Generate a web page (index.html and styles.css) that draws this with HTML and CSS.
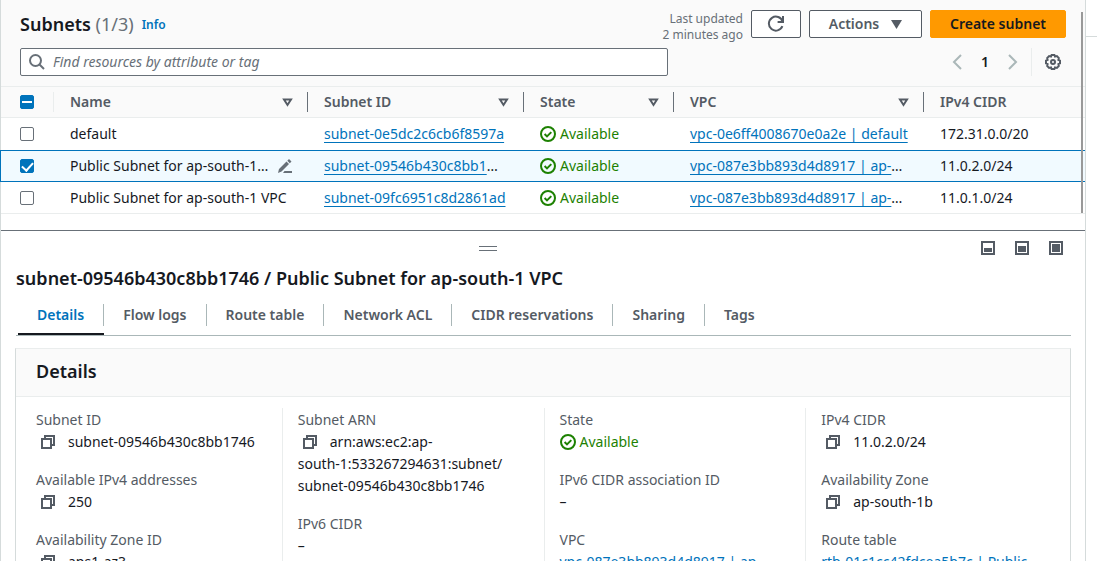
FILE: index.html
```
<!DOCTYPE html>
<html lang="en">
<head>
<meta charset="utf-8">
<title>Subnets</title>
<link rel="stylesheet" href="styles.css">
</head>
<body>
<svg class="defs" aria-hidden="true">
  <symbol id="ok" viewBox="0 0 16 16"><circle cx="8" cy="8" r="7"/><path d="M4.6 8l2.4 2.4 4.3-4.3"/></symbol>
  <symbol id="copy" viewBox="0 0 14 14"><path d="M1 4h9v9H1z M4 4V1h9v9h-3"/></symbol>
  <symbol id="sort" viewBox="0 0 11 9"><path d="M2 1.500h7L5.500 7z"/></symbol>
</svg>
<div class="app">
  <main class="main">
    <section class="list">
      <header class="list-head">
        <div class="title-row">
          <h1 class="title">Subnets <span class="count">(1/3)</span></h1>
          <a class="info" href="#">Info</a>
          <p class="updated">Last updated<br>2 minutes ago</p>
          <button class="btn btn-refresh" type="button" aria-label="Refresh"><svg width="18" height="18" viewBox="0 0 18 18"><path d="M15.4 11.2A7 7 0 1 1 15.6 6.6M16 1v6h-5.4"/></svg></button>
          <button class="btn btn-actions" type="button">Actions <svg class="solid" width="11" height="9" viewBox="0 0 11 9"><path d="M0 0h11L5.500 9z"/></svg></button>
          <button class="btn btn-primary" type="button">Create subnet</button>
        </div>
        <div class="tool-row">
          <label class="search">
            <svg width="16" height="16" viewBox="0 0 16 16"><circle cx="6.500" cy="6.500" r="5.500"/><path d="M10.500 10.500L15 15"/></svg>
            <input type="text" placeholder="Find resources by attribute or tag" aria-label="Find resources">
          </label>
          <nav class="pager">
            <button class="icon-btn faint" type="button" aria-label="Previous page"><svg width="10" height="16" viewBox="0 0 10 16"><path d="M9 1L2 8l7 7"/></svg></button>
            <span class="page">1</span>
            <button class="icon-btn faint" type="button" aria-label="Next page"><svg width="10" height="16" viewBox="0 0 10 16"><path d="M1 1l7 7-7 7"/></svg></button>
          </nav>
          <button class="icon-btn gear" type="button" aria-label="Preferences"><svg width="16" height="16" viewBox="0 0 16 16"><path d="M6.600 1h2.800l.6 1.500 1.900-.4 1.900 1.900-.4 1.900 1.600.700v2.800l-1.600.7.400 1.900-1.900 1.900-1.900-.4-.6 1.500H6.600L6 13.500l-1.900.4L2.200 12l.4-1.900L1 9.400V6.600l1.600-.7L2.200 4l1.900-1.900 1.900.4z"/><circle cx="8" cy="8" r="2"/></svg></button>
        </div>
      </header>
      <table class="grid">
        <colgroup><col class="c-check"><col class="c-name"><col class="c-id"><col class="c-state"><col class="c-vpc"><col></colgroup>
        <thead>
          <tr>
            <th class="check"><div class="th faint-line"><input type="checkbox" class="box mixed" aria-label="Select all"></div></th>
            <th><div class="th">Name <svg width="11" height="9"><use href="#sort"/></svg></div></th>
            <th><div class="th">Subnet ID <svg width="11" height="9"><use href="#sort"/></svg></div></th>
            <th><div class="th">State <svg width="11" height="9"><use href="#sort"/></svg></div></th>
            <th><div class="th">VPC <svg width="11" height="9"><use href="#sort"/></svg></div></th>
            <th><div class="th last">IPv4 CIDR</div></th>
          </tr>
        </thead>
        <tbody>
          <tr>
            <td class="check"><input type="checkbox" class="box" aria-label="Select default"></td>
            <td>default</td>
            <td><a href="#">subnet-0e5dc2c6cb6f8597a</a></td>
            <td><span class="status"><svg width="16" height="16"><use href="#ok"/></svg>Available</span></td>
            <td><a href="#">vpc-0e6ff4008670e0a2e | default</a></td>
            <td>172.31.0.0/20</td>
          </tr>
          <tr class="selected">
            <td class="check"><input type="checkbox" class="box" checked aria-label="Select Public Subnet"></td>
            <td><div class="editable">Public Subnet for ap-south-1… <button class="icon-btn" type="button" aria-label="Edit name"><svg class="solid" width="14" height="14" viewBox="0 0 14 14"><path d="M0 14l1-4 7.500-7.500 2.500 2.500L3.500 12.500zM9.300 1.800L11 0l2.500 2.500-1.700 1.700zM6.500 12H14v2H5z"/></svg></button></div></td>
            <td><a href="#">subnet-09546b430c8bb1</a>…</td>
            <td><span class="status"><svg width="16" height="16"><use href="#ok"/></svg>Available</span></td>
            <td><a href="#">vpc-087e3bb893d4d8917 | ap-</a>…</td>
            <td>11.0.2.0/24</td>
          </tr>
          <tr>
            <td class="check"><input type="checkbox" class="box" aria-label="Select Public Subnet 2"></td>
            <td>Public Subnet for ap-south-1 VPC</td>
            <td><a href="#">subnet-09fc6951c8d2861ad</a></td>
            <td><span class="status"><svg width="16" height="16"><use href="#ok"/></svg>Available</span></td>
            <td><a href="#">vpc-087e3bb893d4d8917 | ap-</a>…</td>
            <td>11.0.1.0/24</td>
          </tr>
        </tbody>
      </table>
      <span class="scrollbar"></span>
    </section>

    <section class="panel">
      <div class="panel-bar">
        <span class="handle"></span>
        <div class="sizes">
          <button class="icon-btn" type="button" aria-label="Small panel"><svg width="14" height="14" viewBox="0 0 14 14"><path d="M1 1h12v12H1z"/><path class="fill" d="M3 7h8v4H3z"/></svg></button>
          <button class="icon-btn" type="button" aria-label="Medium panel"><svg width="14" height="14" viewBox="0 0 14 14"><path d="M1 1h12v12H1z"/><path class="fill" d="M3 5h8v6H3z"/></svg></button>
          <button class="icon-btn" type="button" aria-label="Full panel"><svg width="14" height="14" viewBox="0 0 14 14"><path d="M1 1h12v12H1z"/><path class="fill" d="M3 3h8v8H3z"/></svg></button>
        </div>
      </div>
      <h2 class="panel-title">subnet-09546b430c8bb1746 / Public Subnet for ap-south-1 VPC</h2>
      <nav class="tabs">
        <button class="tab active" type="button"><span>Details</span></button>
        <button class="tab" type="button"><span>Flow logs</span></button>
        <button class="tab" type="button"><span>Route table</span></button>
        <button class="tab" type="button"><span>Network ACL</span></button>
        <button class="tab" type="button"><span>CIDR reservations</span></button>
        <button class="tab" type="button"><span>Sharing</span></button>
        <button class="tab" type="button"><span>Tags</span></button>
      </nav>
      <article class="card">
        <h3 class="card-head">Details</h3>
        <div class="columns">
          <dl class="column">
            <dt>Subnet ID</dt>
            <dd><button class="copy" type="button" aria-label="Copy"><svg width="14" height="14"><use href="#copy"/></svg></button>subnet-09546b430c8bb1746</dd>
            <dt>Available IPv4 addresses</dt>
            <dd><button class="copy" type="button" aria-label="Copy"><svg width="14" height="14"><use href="#copy"/></svg></button>250</dd>
            <dt>Availability Zone ID</dt>
            <dd><button class="copy" type="button" aria-label="Copy"><svg width="14" height="14"><use href="#copy"/></svg></button>aps1-az3</dd>
          </dl>
          <dl class="column">
            <dt>Subnet ARN</dt>
            <dd><button class="copy" type="button" aria-label="Copy"><svg width="14" height="14"><use href="#copy"/></svg></button>arn:aws:ec2:ap-<br>south-1:533267294631:subnet/<br>subnet-09546b430c8bb1746</dd>
            <dt>IPv6 CIDR</dt>
            <dd>–</dd>
          </dl>
          <dl class="column">
            <dt>State</dt>
            <dd><span class="status"><svg width="16" height="16"><use href="#ok"/></svg>Available</span></dd>
            <dt>IPv6 CIDR association ID</dt>
            <dd>–</dd>
            <dt>VPC</dt>
            <dd><a href="#">vpc-087e3bb893d4d8917 | ap-</a></dd>
          </dl>
          <dl class="column">
            <dt>IPv4 CIDR</dt>
            <dd><button class="copy" type="button" aria-label="Copy"><svg width="14" height="14"><use href="#copy"/></svg></button>11.0.2.0/24</dd>
            <dt>Availability Zone</dt>
            <dd><button class="copy" type="button" aria-label="Copy"><svg width="14" height="14"><use href="#copy"/></svg></button>ap-south-1b</dd>
            <dt>Route table</dt>
            <dd><a href="#">rtb-01c1cc42fdcea5b7c | Public</a></dd>
          </dl>
        </div>
      </article>
    </section>
  </main>
  <aside class="rail"></aside>
</div>
</body>
</html>
```
FILE: styles.css
```
* { box-sizing: border-box; }
body {
  margin: 0;
  height: 100vh;
  overflow: hidden;
  background: #fff;
  color: #16191f;
  font: 14px/22px "Noto Sans", "Open Sans", sans-serif;
}
h1, h2, h3, p, dl, dd { margin: 0; }
a { color: #0073bb; text-decoration: none; }
button { font: inherit; color: inherit; background: none; border: 0; padding: 0; }
svg { fill: none; stroke: currentColor; stroke-width: 2; flex: none; }
svg.solid, .fill { fill: currentColor; stroke: none; }
.defs { position: absolute; width: 0; height: 0; }

.app { display: flex; height: 100%; }
.main { position: relative; flex: 1; min-width: 0; overflow: hidden; }
.main::after {
  content: "";
  position: absolute;
  inset: 0;
  border: solid #d5dbdb;
  border-width: 0 1px;
  pointer-events: none;
}
.rail { width: 11px; height: 37px; border-bottom: 1px solid #d5dbdb; }

.list { position: relative; height: 230px; }
.list-head { background: #fafafa; border-bottom: 1px solid #eaeded; padding: 10px 20px; height: 87px; }
.title-row { display: flex; align-items: center; height: 28px; }
.title { font-size: 18px; line-height: 28px; font-weight: 600; }
.count { font-weight: 400; color: #687078; }
.info { margin-left: 8px; padding-top: 2px; font-size: 12px; font-weight: 600; }
.updated { margin-left: auto; padding-top: 6px; text-align: right; font-size: 12px; line-height: 16px; color: #687078; }
.btn {
  display: flex;
  align-items: center;
  justify-content: center;
  height: 28px;
  margin-left: 8px;
  border: 1px solid #545b64;
  border-radius: 2px;
  background: #fff;
  color: #545b64;
  font-weight: 600;
}
.btn-refresh { width: 50px; }
.btn-actions { width: 113px; gap: 12px; }
.btn-primary { width: 136px; background: #ff9900; border-color: #ff9900; color: #16191f; }

.tool-row { display: flex; align-items: center; height: 28px; margin-top: 10px; }
.search {
  display: flex;
  align-items: center;
  gap: 8px;
  flex: 0 1 648px;
  height: 28px;
  padding: 0 8px;
  border: 1px solid #687078;
  border-radius: 2px;
  background: #fff;
  color: #687078;
}
.search input { flex: 1; border: 0; padding: 0; outline: 0; background: none; font: inherit; }
.search input::placeholder { color: #687078; font-style: italic; opacity: 1; }
.icon-btn { display: inline-flex; color: #545b64; }
.faint { color: #aab7b8; }
.pager { display: flex; align-items: center; gap: 19px; margin-left: auto; padding-right: 13px; }
.page { font-weight: 600; }
.gear { height: 28px; align-items: center; border-left: 1px solid #eaeded; padding: 0 5px 0 13px; }

.grid { width: 100%; table-layout: fixed; border-collapse: separate; border-spacing: 0; }
.c-check { width: 54px; }
.c-name { width: 254px; }
.c-id { width: 216px; }
.c-state { width: 150px; }
.c-vpc { width: 250px; }
th { height: 31px; padding: 0; background: #fafafa; border-bottom: 1px solid #eaeded; color: #545b64; text-align: left; font-weight: 600; }
.th {
  display: flex;
  align-items: center;
  justify-content: space-between;
  height: 20px;
  padding: 0 14px 0 16px;
  border-right: 1px solid #687078;
}
.faint-line { border-color: #eaeded; padding-left: 20px; }
.last { border: 0; }
td { height: 32px; padding: 0 0 0 16px; white-space: nowrap; overflow: hidden; }
td.check { padding-left: 20px; }
td a { text-decoration: underline; text-decoration-skip-ink: none; text-decoration-thickness: 1px; text-underline-offset: 3px; }
tbody tr:last-child td { border-bottom: 1px solid #eaeded; }
.selected td { background: #f1faff; border: solid #0073bb; border-width: 1px 0; }
.selected td:first-child { position: relative; z-index: 1; border-left-width: 1px; padding-left: 19px; }
.box {
  appearance: none;
  display: grid;
  place-items: center;
  width: 14px;
  height: 14px;
  margin: 0;
  border: 1px solid #687078;
  border-radius: 2px;
  background: #fff;
}
.box:checked, .mixed { background: #0073bb; border-color: #0073bb; }
.box:checked::after { content: ""; width: 9px; height: 5px; border: solid #fff; border-width: 0 0 2px 2px; transform: translateY(-1px) rotate(-48deg); }
.mixed::after { content: ""; width: 10px; height: 2px; background: #fff; }
.editable { display: flex; align-items: center; justify-content: space-between; padding-right: 16px; }
.editable .icon-btn { color: #687078; }
.status { display: flex; align-items: center; gap: 4px; color: #1d8102; }
.scrollbar { position: absolute; top: 12px; right: 3px; width: 2px; height: 201px; background: #999; }

.panel { border-top: 1px solid #687078; padding: 0 15px; }
.panel-bar { position: relative; display: flex; align-items: center; justify-content: flex-end; height: 34px; padding-right: 8px; }
.handle { position: absolute; left: 464px; top: 15px; width: 18px; height: 5px; border: solid #687078; border-width: 1px 0; }
.sizes { display: flex; gap: 20px; }
.panel-title { padding-left: 1px; font-size: 18px; line-height: 26px; font-weight: 600; }
.tabs { display: flex; margin: 6px 0 0 1px; padding-left: 2px; border-bottom: 1px solid #aab7b8; }
.tab { padding: 6px 0; height: 38px; color: #545b64; font-weight: 600; border-bottom: 2px solid transparent; }
.tab span { display: block; padding: 0 19px; border-right: 1px solid #aab7b8; }
.tab:last-child span { border: 0; }
.tab.active { color: #0073bb; border-color: #16191f; }

.card { margin-top: 12px; border: 1px solid #d5dbdb; border-top-color: #eaeded; }
.card-head { padding: 9px 20px; height: 48px; background: #fafafa; border-bottom: 1px solid #eaeded; font-size: 18px; line-height: 26px; font-weight: 600; }
.columns { display: grid; grid-template-columns: repeat(4, 1fr); padding: 11px 3px 20px 4px; }
.column { padding: 1px 0 0 15px; border-left: 1px solid #eaeded; min-width: 0; white-space: nowrap; }
.column:first-child { border-left-color: transparent; }
dt { color: #545b64; }
dd { margin-bottom: 16px; }
.copy { display: inline-flex; width: 32px; padding-left: 5px; vertical-align: -2px; color: #545b64; }
```
